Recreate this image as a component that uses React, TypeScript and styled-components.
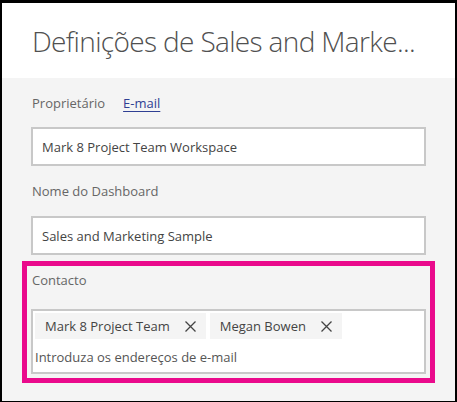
import styled, { createGlobalStyle } from "styled-components";

const GlobalStyle = createGlobalStyle`
  html, body {
    margin: 0;
    padding: 0;
    background: #000;
  }
  body {
    font-family: "Segoe UI", "Open Sans", "Noto Sans", sans-serif;
  }
`;

const Dialog = styled.div`
  box-sizing: border-box;
  width: 457px;
  height: 402px;
  border-top: 3px solid #000;
  border-left: 2px solid #000;
  border-right: 2px solid #000;
  border-bottom: 1px solid #000;
  display: flex;
  flex-direction: column;
  background: #f4f4f4;
  overflow: hidden;
`;

const Header = styled.header`
  height: 75px;
  flex: none;
  background: #fff;
  display: flex;
  align-items: center;
  padding-left: 30px;
`;

const Title = styled.h1`
  margin: 0;
  font-size: 28px;
  letter-spacing: -0.65px;
  font-weight: 300;
  color: #505050;
  white-space: nowrap;
`;

const Body = styled.div`
  flex: 1;
  padding: 15px 29px 0;
  display: flex;
  flex-direction: column;
`;

const OwnerRow = styled.div`
  display: flex;
  align-items: center;
  gap: 18px;
  height: 20px;
  padding-left: 1px;
`;

const Label = styled.div<{ $gap: number }>`
  font-size: 13px;
  line-height: 20px;
  color: #666;
  padding-left: 1px;
  margin-bottom: ${(p) => p.$gap}px;
`;

const OwnerLabel = styled.span`
  font-size: 13px;
  color: #666;
`;

const Link = styled.a`
  font-size: 13px;
  color: #2f3f93;
  text-decoration: underline;
  text-underline-offset: 3px;
`;

const TextBox = styled.div<{ $top: number }>`
  box-sizing: border-box;
  height: 39px;
  margin-top: ${(p) => p.$top}px;
  margin-bottom: 15px;
  border: 2px solid #c8c8c8;
  background: #fff;
  display: flex;
  align-items: center;
  padding-left: 9px;
  font-size: 13px;
  color: #444;
`;

const Highlight = styled.section`
  margin: -9px -9px 0;
  padding: 4px;
  border: 5px solid #ea0a8c;
`;

const PeopleBox = styled.div`
  box-sizing: border-box;
  height: 65px;
  border: 2px solid #c8c8c8;
  background: #fff;
  padding: 2px;
  display: flex;
  flex-direction: column;
  gap: 8px;
`;

const ChipRow = styled.div`
  display: flex;
  gap: 4px;
`;

const Chip = styled.div`
  height: 26px;
  display: flex;
  align-items: center;
  gap: 15px;
  padding: 0 10px;
  background: #f4f4f4;
  font-size: 13px;
  color: #444;
`;

const Placeholder = styled.div`
  font-size: 13px;
  line-height: 20px;
  color: #555;
`;

const CloseIcon = () => (
  <svg width="11" height="11" viewBox="0 0 11 11" aria-hidden="true">
    <path d="M0.5 0.5 L10.5 10.5 M10.5 0.5 L0.5 10.5" stroke="#444" strokeWidth="1.3" fill="none" />
  </svg>
);

const contacts = ["Mark 8 Project Team", "Megan Bowen"];

export default function App() {
  return (
    <>
      <GlobalStyle />
      <Dialog>
        <Header>
          <Title>Definições de Sales and Marke...</Title>
        </Header>
        <Body>
          <OwnerRow>
            <OwnerLabel>Proprietário</OwnerLabel>
            <Link>E-mail</Link>
          </OwnerRow>
          <TextBox $top={14}>Mark 8 Project Team Workspace</TextBox>
          <Label $gap={15}>Nome do Dashboard</Label>
          <TextBox $top={0}>Sales and Marketing Sample</TextBox>
          <Highlight>
            <Label $gap={19}>Contacto</Label>
            <PeopleBox>
              <ChipRow>
                {contacts.map((c) => (
                  <Chip key={c}>
                    {c}
                    <CloseIcon />
                  </Chip>
                ))}
              </ChipRow>
              <Placeholder>Introduza os endereços de e-mail</Placeholder>
            </PeopleBox>
          </Highlight>
        </Body>
      </Dialog>
    </>
  );
}
